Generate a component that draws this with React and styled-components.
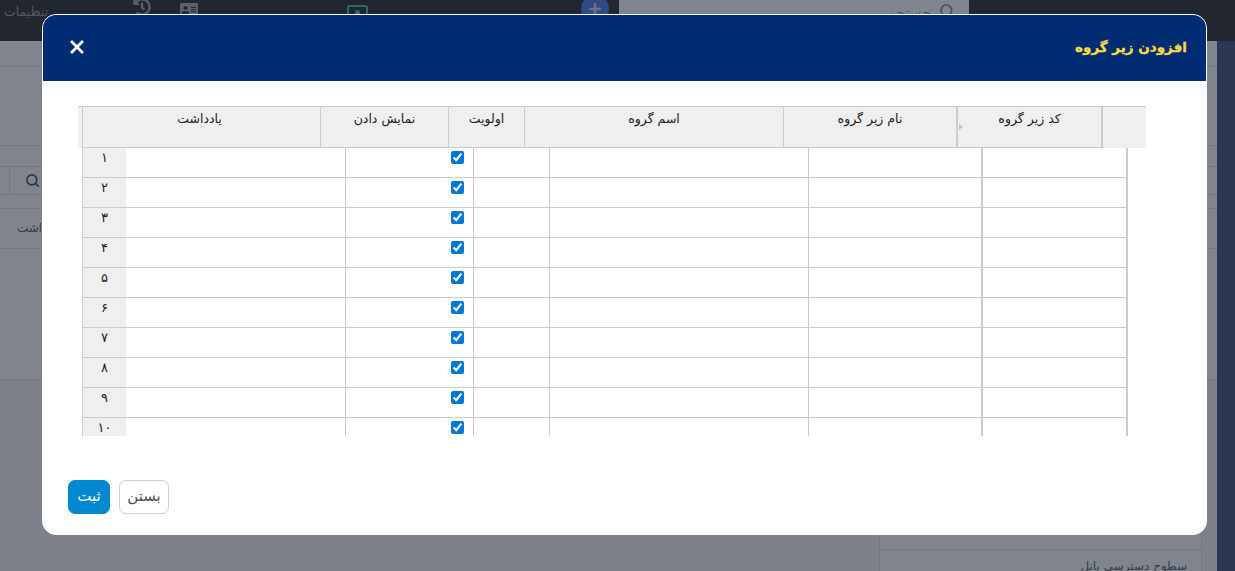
import React from "react";
import styled, { createGlobalStyle } from "styled-components";
import { FaHistory, FaAddressCard, FaPlus } from "react-icons/fa";
import { Search, X } from "lucide-react";

const Global = createGlobalStyle`
  html, body { margin: 0; padding: 0; height: 100%; overflow: hidden; background: #fff; }
  body { font-family: "DejaVu Sans", "Liberation Sans", sans-serif; font-size: 13px; }
  * { box-sizing: border-box; }
`;

const Page = styled.div`
  height: 100vh;
  display: flex;
  flex-direction: column;
  overflow: hidden;
`;
const Navbar = styled.header`
  height: 41px;
  flex: none;
  background: #444543;
  display: flex;
  align-items: flex-start;
  padding-left: 5px;
  overflow: hidden;
`;
const NavLabel = styled.span`
  font-size: 12.5px;
  line-height: 23px;
  color: #a4a7a9;
  direction: rtl;
  width: 43px;
  white-space: nowrap;
`;
const NavIcon = styled.span`
  display: flex;
  color: #b4b7b8;
  margin-left: ${(p) => p.$gap}px;
  margin-top: ${(p) => p.$top}px;
`;
const GreenBox = styled.span`
  margin-left: 149px;
  margin-top: 5px;
  width: 21px;
  height: 20px;
  border: 2px solid #5ad0a0;
  border-radius: 3px;
  display: flex;
  align-items: flex-start;
  justify-content: center;
  padding-top: 3px;
  &::after {
    content: "";
    width: 5px;
    height: 5px;
    border-radius: 50%;
    background: #5ad0a0;
  }
`;
const PlusCircle = styled.span`
  margin-left: 213px;
  margin-top: -5px;
  width: 28px;
  height: 28px;
  border-radius: 50%;
  background: #5a8ae8;
  color: #d8dde6;
  display: flex;
  align-items: center;
  justify-content: center;
  flex: none;
`;
const NavSearch = styled.div`
  margin-left: 10px;
  width: 350px;
  height: 41px;
  background: #fff;
  display: flex;
  justify-content: flex-end;
  align-items: flex-start;
  gap: 8px;
  padding: 3px 14px 0 0;
  color: #8a8f98;
  font-size: 14px;
  line-height: 20px;
`;

const Main = styled.div`
  flex: 1;
  display: flex;
  min-height: 0;
`;
const Content = styled.div`
  flex: 1;
  display: flex;
  flex-direction: column;
  background: #f8f9fb;
`;
const Panel = styled.section`
  height: 339px;
  flex: none;
  background: #fff;
  border-bottom: 1px solid #e4e5e8;
  display: flex;
  flex-direction: column;
`;
const Crumb = styled.div`
  height: 26px;
  border-bottom: 1px solid #e6e7ea;
`;
const Spacer = styled.div`
  height: 79px;
  border-bottom: 1px solid #e6e7ea;
`;
const ToolArea = styled.div`
  height: 63px;
  padding-top: 20px;
  border-bottom: 1px solid #e6e7ea;
`;
const ToolRow = styled.div`
  height: 29px;
  display: flex;
  border-top: 1px solid #e2e3e6;
  border-bottom: 1px solid #e2e3e6;
`;
const ToolCell = styled.div`
  width: 10px;
  border-right: 1px solid #e2e3e6;
`;
const ToolIcon = styled.div`
  padding-left: 15px;
  display: flex;
  align-items: center;
  color: #5a6070;
`;
const ListHead = styled.div`
  height: 40px;
  border-bottom: 1px solid #e6e7ea;
  padding-left: 17px;
  font-size: 12px;
  line-height: 38px;
  color: #6a7080;
  display: flex;
`;
const Lower = styled.div`
  flex: 1;
  display: flex;
  justify-content: flex-end;
  padding-right: 15px;
`;
const Card = styled.div`
  width: 323px;
  background: #fff;
  border-left: 1px solid #e2e3e6;
  border-right: 1px solid #e2e3e6;
  direction: rtl;
`;
const CardRow = styled.div`
  height: 20px;
  margin-top: 150px;
  border-bottom: 1px solid #e6e7ea;
`;
const CardText = styled.div`
  padding: 7px 14px 0 0;
  font-size: 12px;
  line-height: 18px;
  color: #6a7080;
  white-space: nowrap;
`;
const Strip = styled.aside`
  width: 18px;
  flex: none;
  background: #566385;
`;

const Backdrop = styled.div`
  position: fixed;
  inset: 0;
  background: rgba(0, 9, 27, 0.5);
  padding: 14px 28px 0 42px;
`;
const Modal = styled.div`
  height: 521px;
  background: #fff;
  border: 1px solid #fff;
  border-radius: 14px;
  overflow: hidden;
  display: flex;
  flex-direction: column;
`;
const ModalHeader = styled.div`
  height: 66px;
  flex: none;
  background: #002c73;
  display: flex;
  align-items: center;
  justify-content: space-between;
  padding: 0 19px 2px 24px;
`;
const CloseButton = styled.button`
  all: unset;
  display: flex;
  color: #fff;
`;
const Title = styled.h2`
  margin: 0;
  color: #ffdb45;
  font-size: 13.5px;
  font-weight: bold;
  -webkit-text-stroke: 0.3px #ffdb45;
  direction: rtl;
`;
const TableWrap = styled.div`
  margin: 25px 0 0 35px;
  width: 1068px;
`;
const HeadRow = styled.div`
  height: 42px;
  display: grid;
  grid-template-columns: 4px 238px 128px 76px 259px 173px 145px 45px;
  background: #efefef;
  border-top: 1px solid #ccc;
`;
const HeadCell = styled.div`
  position: relative;
  border-left: ${(p) => (p.$thick ? "2px" : "1px")} solid #ccc;
  border-bottom: 1px solid #ccc;
  &:first-child { border: 0; }
  &:last-child { border-bottom: 0; }
  text-align: center;
  direction: rtl;
  padding: 2px ${(p) => p.$inset || 0}px 0 0;
  font-size: 12.5px;
  line-height: 20px;
  color: #222;
`;
const SortMark = styled.span`
  position: absolute;
  left: 1px;
  top: 17px;
  width: 0;
  height: 0;
  border-left: 4px solid #c4c4c4;
  border-top: 3px solid transparent;
  border-bottom: 3px solid transparent;
`;
const Rows = styled.div`
  margin-left: 4px;
  height: 288px;
  overflow: hidden;
`;
const Row = styled.div`
  height: 30px;
  width: 1046px;
  display: grid;
  grid-template-columns: 44px 219px 128px 76px 259px 173px 147px;
`;
const RowNumber = styled.div`
  background: #efefef;
  border-left: 1px solid #ccc;
  border-bottom: 1px solid #ccc;
  text-align: center;
  font-size: 13px;
  line-height: 20px;
  color: #222;
  direction: rtl;
`;
const Cell = styled.div`
  border-bottom: 1px solid #ccc;
  border-left: ${(p) => (p.$thick ? "2px" : p.$none ? "0" : "1px")} solid #ccc;
  border-right: ${(p) => (p.$end ? "2px solid #ccc" : "0")};
`;
const CheckCell = styled(Cell)`
  display: flex;
  justify-content: flex-end;
  align-items: flex-start;
  padding: 3px 9px 0 0;
`;
const Check = styled.input`
  margin: 0;
  width: 13px;
  height: 13px;
  accent-color: #0078d7;
`;
const Footer = styled.div`
  margin: 44px 0 0 25px;
  display: flex;
  gap: 9px;
  direction: ltr;
`;
const Button = styled.button`
  height: 34px;
  width: ${(p) => (p.$primary ? 42 : 50)}px;
  padding: 0 0 2px;
  border-radius: 7px;
  border: 1px solid ${(p) => (p.$primary ? "#0288d1" : "#ccced6")};
  background: ${(p) => (p.$primary ? "#0288d1" : "#fff")};
  color: ${(p) => (p.$primary ? "#fff" : "#495057")};
  font-family: inherit;
  font-size: 15px;
  direction: rtl;
`;

const heads = ["یادداشت", "نمایش دادن", "اولویت", "اسم گروه", "نام زیر گروه", "کد زیر گروه"];
const nums = ["۱", "۲", "۳", "۴", "۵", "۶", "۷", "۸", "۹", "۱۰"];

export default function App() {
  return (
    <Page>
      <Global />
      <Navbar>
        <NavLabel>تنظیمات</NavLabel>
        <NavIcon $gap={85} $top={-2}><FaHistory size={18} /></NavIcon>
        <NavIcon $gap={29} $top={1}><FaAddressCard size={18} /></NavIcon>
        <GreenBox />
        <PlusCircle><FaPlus size={14} /></PlusCircle>
        <NavSearch>
          <span dir="rtl">جستجو...</span>
          <Search size={16} strokeWidth={2.5} />
        </NavSearch>
      </Navbar>
      <Main>
        <Content>
          <Panel>
            <Crumb />
            <Spacer />
            <ToolArea>
              <ToolRow>
                <ToolCell />
                <ToolIcon><Search size={15} strokeWidth={2.6} /></ToolIcon>
              </ToolRow>
            </ToolArea>
            <ListHead><span dir="rtl">یادداشت</span></ListHead>
          </Panel>
          <Lower>
            <Card>
              <CardRow />
              <CardText>سطوح دسترسی پانل</CardText>
            </Card>
          </Lower>
        </Content>
        <Strip />
      </Main>
      <Backdrop>
        <Modal>
          <ModalHeader>
            <CloseButton aria-label="بستن"><X size={20} strokeWidth={3.2} strokeLinecap="square" /></CloseButton>
            <Title>افزودن زیر گروه</Title>
          </ModalHeader>
          <TableWrap>
            <HeadRow>
              <HeadCell />
              {heads.map((h, i) => (
                <HeadCell key={h} $thick={i === 5} $inset={i === 0 ? 4 : 0}>
                  {i === 5 && <SortMark />}
                  {h}
                </HeadCell>
              ))}
              <HeadCell $thick />
            </HeadRow>
            <Rows>
              {nums.map((n) => (
                <Row key={n}>
                  <RowNumber>{n}</RowNumber>
                  <Cell $none />
                  <CheckCell><Check type="checkbox" defaultChecked /></CheckCell>
                  <Cell />
                  <Cell />
                  <Cell />
                  <Cell $thick $end />
                </Row>
              ))}
            </Rows>
          </TableWrap>
          <Footer>
            <Button $primary>ثبت</Button>
            <Button>بستن</Button>
          </Footer>
        </Modal>
      </Backdrop>
    </Page>
  );
}
